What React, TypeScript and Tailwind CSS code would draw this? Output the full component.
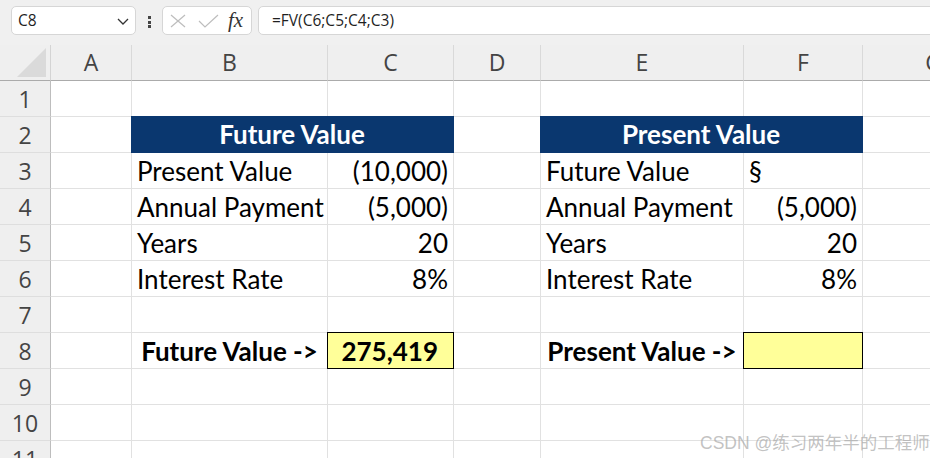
import React from 'react';

type Kind = 'label' | 'num' | 'head' | 'bold' | 'result' | 'input' | 'sym';

interface Cell {
  text?: string;
  span?: number;
  kind?: Kind;
}

const COLUMNS = ['A', 'B', 'C', 'D', 'E', 'F', 'G'];

const ROWS: Cell[][] = [
  [{}, {}, {}, {}, {}, {}, {}],
  [{}, { text: 'Future Value', span: 2, kind: 'head' }, {}, { text: 'Present Value', span: 2, kind: 'head' }, {}],
  [{}, { text: 'Present Value', kind: 'label' }, { text: '(10,000)', kind: 'num' }, {}, { text: 'Future Value', kind: 'label' }, { text: '§', kind: 'sym' }, {}],
  [{}, { text: 'Annual Payment', kind: 'label' }, { text: '(5,000)', kind: 'num' }, {}, { text: 'Annual Payment', kind: 'label' }, { text: '(5,000)', kind: 'num' }, {}],
  [{}, { text: 'Years', kind: 'label' }, { text: '20', kind: 'num' }, {}, { text: 'Years', kind: 'label' }, { text: '20', kind: 'num' }, {}],
  [{}, { text: 'Interest Rate', kind: 'label' }, { text: '8%', kind: 'num' }, {}, { text: 'Interest Rate', kind: 'label' }, { text: '8%', kind: 'num' }, {}],
  [{}, {}, {}, {}, {}, {}, {}],
  [{}, { text: 'Future Value ->', kind: 'bold' }, { text: '275,419', kind: 'result' }, {}, { text: 'Present Value ->', kind: 'bold' }, { kind: 'input' }, {}],
  [{}, {}, {}, {}, {}, {}, {}],
  [{}, {}, {}, {}, {}, {}, {}],
  [{}, {}, {}, {}, {}, {}, {}],
];

const KIND_CLASS: Record<Kind, string> = {
  label: 'h-9 border-r border-b border-[#e1e1e1] justify-start px-[5px]',
  sym: 'h-9 border-r border-b border-[#e1e1e1] justify-start px-[5px]',
  num: 'h-9 border-r border-b border-[#e1e1e1] justify-end pr-[5px]',
  bold: 'h-9 border-r border-b border-[#e1e1e1] justify-center font-bold',
  head: 'col-span-2 h-[37px] -mt-px -ml-px border-r border-b border-[#0a376f] bg-[#0a376f] text-white font-bold justify-center',
  result: 'h-[37px] -mt-px -ml-px border border-black bg-[#ffff99] font-bold justify-end pr-[15px]',
  input: 'h-[37px] -mt-px -ml-px border border-black bg-[#ffff99]',
};

const Toolbar = () => (
  <div className="flex h-[45px] items-start overflow-hidden bg-[#f0f0f0] pt-[6px] font-['Open_Sans',sans-serif] text-[#1f1f1f]">
    {/* Name box */}
    <div className="ml-[11px] flex h-[29px] w-[125px] items-center justify-between rounded-[5px] border border-[#d6d6d6] bg-white pl-[6px] pr-[5px]">
      <span className="text-[15.5px]">C8</span>
      <svg width="14" height="14" viewBox="0 0 14 14" fill="none" stroke="#333" strokeWidth="1.3">
        <polyline points="2,5 7,10 12,5" />
      </svg>
    </div>

    {/* Vertical ellipsis */}
    <div className="ml-[12px] mt-[10px] flex flex-col gap-[1.5px]">
      <div className="h-[3px] w-[3px] bg-[#444]" />
      <div className="h-[3px] w-[3px] bg-[#444]" />
      <div className="h-[3px] w-[3px] bg-[#444]" />
    </div>

    {/* Cancel / enter / fx */}
    <div className="ml-[11px] flex h-[29px] w-[90px] items-center rounded-[5px] border border-[#d6d6d6] bg-white pl-[7px]">
      <svg width="16" height="14" viewBox="0 0 16 14" fill="none" stroke="#bdbdbd" strokeWidth="1.2">
        <line x1="1" y1="1" x2="15" y2="13" />
        <line x1="15" y1="1" x2="1" y2="13" />
      </svg>
      <svg className="ml-[12px]" width="21" height="14" viewBox="0 0 21 14" fill="none" stroke="#bdbdbd" strokeWidth="1.2">
        <polyline points="1,7 7,13 20,1" />
      </svg>
      <span className="ml-[9px] font-['Liberation_Serif',serif] text-[21px] italic leading-none text-[#333]">fx</span>
    </div>

    {/* Formula */}
    <div className="-mr-[10px] ml-[6px] flex h-[29px] flex-1 items-center rounded-[5px] border border-[#d6d6d6] bg-white pl-[13px]">
      <span className="text-[15.5px]">=FV(C6;C5;C4;C3)</span>
    </div>
  </div>
);

const Sheet = () => (
  <div className="grid grid-cols-[51px_81px_196px_126px_87px_203px_119px_142px]">
    {/* Corner */}
    <div className="flex h-9 items-end justify-end border-r border-b border-r-[#d4d4d4] border-b-[#ababab] bg-[#efefef] pb-[3px] pr-[3px]">
      <svg width="30" height="29" viewBox="0 0 30 29">
        <polygon points="29,0 29,29 0,29" fill="#dadada" />
      </svg>
    </div>
    {COLUMNS.map((c) => (
      <div
        key={c}
        className="flex h-9 items-center justify-center border-r border-b border-r-[#d9d9d9] border-b-[#ababab] bg-[#efefef] font-['Open_Sans',sans-serif] text-[23px] text-[#444]"
      >
        {c}
      </div>
    ))}

    {ROWS.map((row, r) => (
      <React.Fragment key={r}>
        <div className="flex h-9 items-center justify-center border-r border-b border-r-[#bdbdbd] border-b-[#dedede] bg-[#efefef] pt-[2px] font-['Open_Sans',sans-serif] text-[23px] text-[#444]">
          {r + 1}
        </div>
        {row.map((cell, i) => (
          <div
            key={i}
            className={`flex items-center overflow-hidden whitespace-nowrap pt-[1px] font-['Lato',sans-serif] text-[26px] text-black ${
              cell.kind ? KIND_CLASS[cell.kind] : 'h-9 border-r border-b border-[#e1e1e1]'
            }`}
          >
            {cell.text}
          </div>
        ))}
      </React.Fragment>
    ))}
  </div>
);

export default function App() {
  return (
    <div className="relative h-[458px] w-[930px] overflow-hidden bg-white">
      <Toolbar />
      <Sheet />
      {/* Watermark */}
      <div className="pointer-events-none absolute left-[700px] top-[430px] whitespace-nowrap font-['Liberation_Sans','Noto_Sans_CJK_SC',sans-serif] text-[17.5px] text-[#a8a8a8]/70">
        CSDN @练习两年半的工程师
      </div>
    </div>
  );
}
